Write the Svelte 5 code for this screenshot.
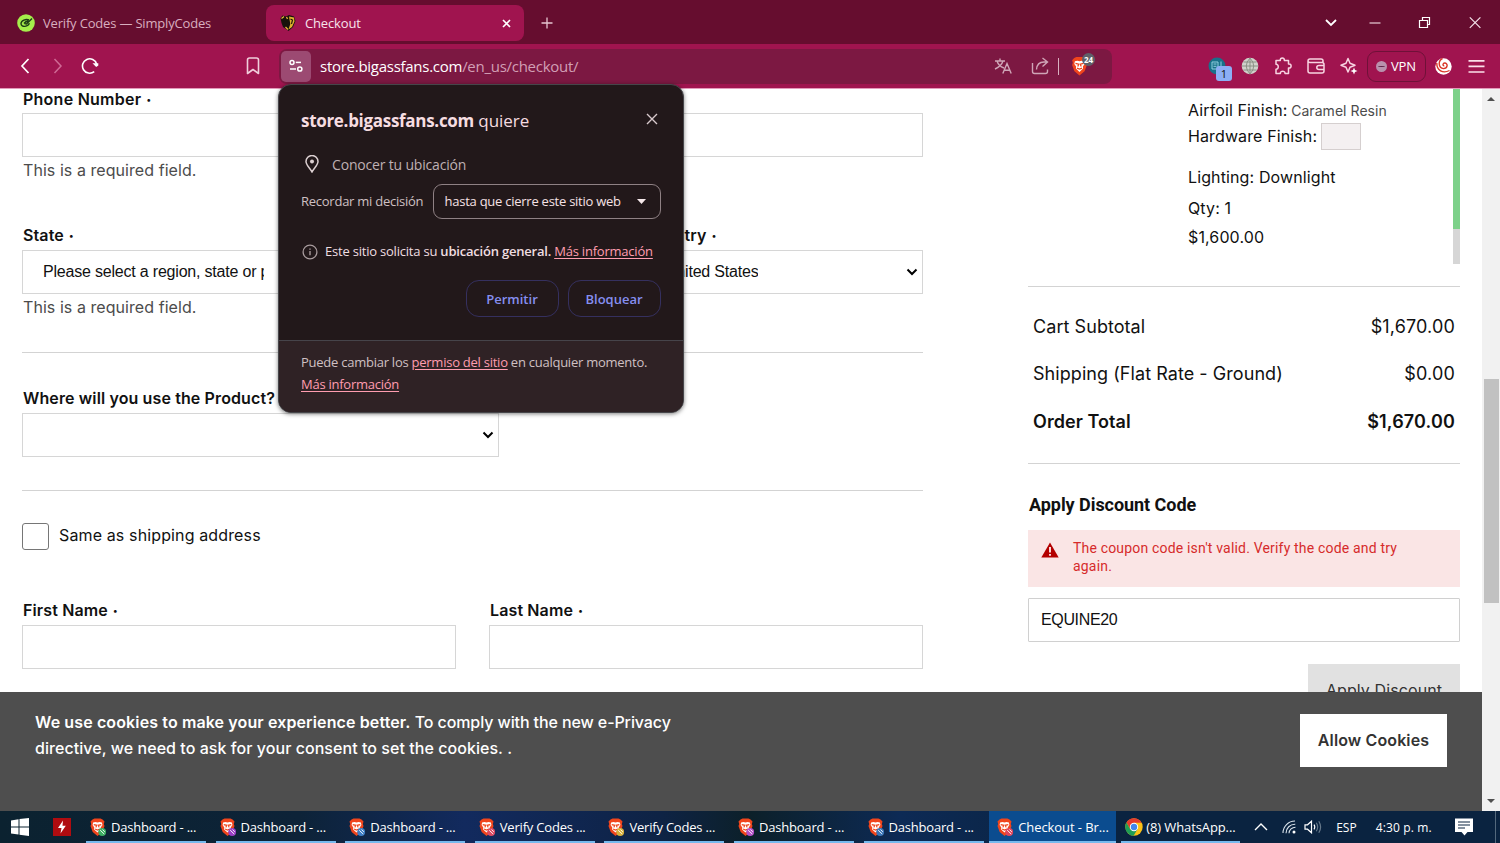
<script lang="ts">
  interface Task {
    title: string;
    badge: string;
    chrome?: boolean;
    active?: boolean;
  }

  const tasks: Task[] = [
    { title: 'Dashboard - ...', badge: '#3cae62' },
    { title: 'Dashboard - ...', badge: '#9a3fc4' },
    { title: 'Dashboard - ...', badge: '#3e7fc6' },
    { title: 'Verify Codes ...', badge: '#dd4a63' },
    { title: 'Verify Codes ...', badge: '#d8b13c' },
    { title: 'Dashboard - ...', badge: '#b652c8' },
    { title: 'Dashboard - ...', badge: '#3a76b8' },
    { title: 'Checkout - Br...', badge: '#e0465c', active: true },
    { title: '(8) WhatsApp...', badge: '', chrome: true }
  ];

  const totals = [
    { label: 'Cart Subtotal', value: '$1,670.00' },
    { label: 'Shipping (Flat Rate - Ground)', value: '$0.00' },
    { label: 'Order Total', value: '$1,670.00', strong: true }
  ];

  let coupon = $state('EQUINE20');
</script>

{#snippet lion()}
  <path d="M4 1.5 L6 0.5 H12 L14 1.5 L16 3.5 L15.3 6 L16 8 L13.8 14 L9 18 L4.2 14 L2 8 L2.7 6 L2 3.5Z" fill="#f0451c" />
  <path d="M4.6 4.6 L7 4 L9 4.5 L11 4 L13.4 4.6 L13.9 7 L12.2 9.4 L12.4 11.4 L9 14.6 L5.6 11.4 L5.8 9.4 L4.1 7Z" fill="#fff" />
  <path d="M5.2 6.6 L8.2 7.3 L7.4 9.4 M12.8 6.6 L9.8 7.3 L10.6 9.4 M6.6 11 L9 12 L11.4 11" stroke="#f0451c" stroke-width="1.2" fill="none" />
{/snippet}

{#snippet arrow()}
  <svg class="arrow" width="12" height="8" viewBox="0 0 12 8">
    <path d="M1.5 1.5 L6 6 L10.5 1.5" fill="none" stroke="#000" stroke-width="2" />
  </svg>
{/snippet}

<div class="window">
  <header class="tabs">
    <div class="tab">
      <svg width="18" height="18" viewBox="0 0 18 18">
        <circle cx="9" cy="9" r="8.8" fill="#a5ee4b" />
        <path d="M15 4.5 L9.5 10 L7.5 9.5 M12 6 C9 4.5 4 6.5 4 9.8 C4.2 13.6 11.5 13 12.3 9.2 M7 9.5 Q8.5 7.2 11.5 7" fill="none" stroke="#1c3a16" stroke-width="1.4" />
      </svg>
      <span class="t-verify">Verify Codes — SimplyCodes</span>
    </div>
    <div class="tab active">
      <svg width="16" height="18" viewBox="0 0 16 18">
        <path d="M0.5 4 L2.5 1.5 L6 2.5 L9 1 L14 2.5 L15.5 7 L13 13 L8.5 17 L6 15 L3 13 L1.5 9Z" fill="#17120b" />
        <path d="M9 2.5 L14 3.5 L14.5 7.5 L12 13 L8.5 15.5 L10.3 10Z" fill="#e0b02c" />
        <path d="M1.5 4.5 L4 2.5 M6.5 3 L7.5 5 M5.5 13 L8 15.5" stroke="#e5b83a" stroke-width="1.3" fill="none" />
        <path d="M10.5 5 L12.5 6 L11.5 10" stroke="#17120b" stroke-width="1.1" fill="none" />
      </svg>
      <span class="t-checkout">Checkout</span>
      <svg class="tab-close" width="9" height="9" viewBox="0 0 9 9">
        <path d="M1 1 L8 8 M8 1 L1 8" stroke="#fff" stroke-width="1.7" />
      </svg>
    </div>
    <svg class="new-tab" width="12" height="12" viewBox="0 0 12 12">
      <path d="M6 0.5 V11.5 M0.5 6 H11.5" stroke="#e6c5d1" stroke-width="1.3" />
    </svg>
    <div class="controls">
      <svg width="14" height="14" viewBox="0 0 14 14"><path d="M2 4 L7 9 L12 4" fill="none" stroke="#fff" stroke-width="1.8" /></svg>
      <svg width="14" height="14" viewBox="0 0 14 14"><path d="M1.5 7 H12.5" stroke="#e8cdd7" stroke-width="1.2" /></svg>
      <svg width="14" height="14" viewBox="0 0 14 14"><path d="M1.5 4.5 H9.5 V11.5 H1.5Z M4.5 4.5 V1.5 H11.5 V8.5 H9.5" fill="none" stroke="#fff" stroke-width="1.2" /></svg>
      <svg width="14" height="14" viewBox="0 0 14 14"><path d="M1.8 1.3 L12.4 11.9 M12.4 1.3 L1.8 11.9" stroke="#f3e2e9" stroke-width="1.2" /></svg>
    </div>
  </header>

  <div class="toolbar">
    <div class="nav">
      <svg width="12" height="18" viewBox="0 0 12 18"><path d="M9.5 2 L3 9 L9.5 16" fill="none" stroke="#fff" stroke-width="1.7" /></svg>
      <svg width="12" height="18" viewBox="0 0 12 18"><path d="M2.5 2 L9 9 L2.5 16" fill="none" stroke="#cf6a95" stroke-width="1.5" /></svg>
      <svg width="18" height="18" viewBox="0 0 18 18">
        <path d="M13.2 14.6 A7.2 7.2 0 1 1 15.6 7" fill="none" stroke="#fff" stroke-width="1.6" />
        <path d="M11.5 6.3 H17.3 V8.6 L15.2 10 Z" fill="#fff" />
      </svg>
      <svg class="bookmark" width="14" height="18" viewBox="0 0 14 18"><path d="M1.5 3 Q1.5 1 3.5 1 H10.5 Q12.5 1 12.5 3 V16.5 L7 12.5 L1.5 16.5Z" fill="none" stroke="#f0cddb" stroke-width="1.6" stroke-linejoin="round" /></svg>
    </div>
    <div class="url">
      <div class="site">
        <svg width="16" height="16" viewBox="0 0 16 16" fill="none" stroke="#fff" stroke-width="1.5">
          <circle cx="4" cy="4.4" r="2" /><path d="M7.8 4.4 H13" />
          <circle cx="11.8" cy="11" r="2.1" /><path d="M2 11 H8" />
        </svg>
      </div>
      <span class="address"><b>store.bigassfans.com</b>/en_us/checkout/</span>
      <svg class="translate" width="18" height="18" viewBox="0 0 18 18" fill="none" stroke="#cfa5b7" stroke-width="1.4">
        <path d="M1 4 H11 M6 1.5 V4 M3 4 Q4.5 9 10 11 M9 4 Q7.5 9 1 12 M8.8 16.5 L13 6.5 L17.2 16.5 M10.2 13.2 H15.8" />
      </svg>
      <svg class="share" width="18" height="18" viewBox="0 0 18 18" fill="none" stroke="#cfa5b7" stroke-width="1.4">
        <path d="M1.5 6 V14.5 Q1.5 16.5 3.5 16.5 H14.5 Q16.5 16.5 16.5 14.5 V12.5 M11.5 1 L16.5 5 L11.5 9.5 M16.5 5 H13 Q6 5 5.5 12.5" />
      </svg>
      <i class="sep"></i>
      <span class="shields">
        <svg width="19" height="20" viewBox="0 0 18 18">{@render lion()}</svg>
        <em>24</em>
      </span>
    </div>
    <div class="extensions">
      <span class="ext-doc">
        <svg width="18" height="18" viewBox="0 0 18 18"><circle cx="9" cy="9" r="8.5" fill="#19708a" /><path d="M4 5 H10 V12 H4Z M5.5 7 H8.5 M5.5 9.3 H8.5 M13 4.5 V9" fill="none" stroke="#8fd0e0" stroke-width="1" /></svg>
        <em>1</em>
      </span>
      <svg width="18" height="18" viewBox="0 0 18 18"><circle cx="9" cy="9" r="8.3" fill="#d0d2cb" /><path d="M9 1 V17 M1 9 H17 M2.5 5 H15.5 M2.5 13 H15.5 M9 1 Q1.5 9 9 17 M9 1 Q16.5 9 9 17" fill="none" stroke="#858b80" stroke-width="0.9" /></svg>
      <svg width="18" height="18" viewBox="0 0 18 18"><path d="M2 3.5 H6.3 C5.6 0.2 11 0.2 10.3 3.5 H14.5 V7 C18 6.3 18 11.7 14.5 11 V16.5 H11 C11.4 13.4 6 13.4 6.4 16.5 H2 V12.3 C5 12.4 5 7 2 7.3Z" fill="none" stroke="#f7d3e1" stroke-width="1.5" stroke-linejoin="round" /></svg>
      <svg width="18" height="18" viewBox="0 0 18 18" fill="none" stroke="#f7d3e1" stroke-width="1.5"><path d="M16 5.5 V3.8 Q16 2 14 2 H3 Q1 2 1 4 Q1 5.5 3 5.5 H15 Q17 5.5 17 7.5 V14 Q17 16 15 16 H3 Q1 16 1 14 V4 M17 8.5 H12 Q9.8 8.5 9.8 10.5 Q9.8 12.5 12 12.5 H17" /></svg>
      <svg width="18" height="18" viewBox="0 0 18 18"><path d="M8 1.5 L10 6.2 L15 8.2 L10 10.2 L8 15 L6 10.2 L1 8.2 L6 6.2Z" fill="none" stroke="#f7d3e1" stroke-width="1.5" stroke-linejoin="round" /><path d="M14 10.5 L15 13 L17.5 14 L15 15 L14 17.5 L13 15 L10.5 14 L13 13Z" fill="#fff" /></svg>
      <span class="vpn"><i></i>VPN</span>
      <svg width="17" height="17" viewBox="0 0 17 17"><circle cx="8.5" cy="8.5" r="8.2" fill="#fff" /><path d="M7.5 0.5 C3 2.5 3 10 8.5 10.6 C12.8 10.6 13.2 5.5 10 5 C7.7 4.8 7.3 7.8 9.3 8 M1.8 5 C1.5 12.5 8 15.8 14.5 12.5" fill="none" stroke="#d93628" stroke-width="1.4" /></svg>
      <svg class="menu" width="17" height="15" viewBox="0 0 17 15"><path d="M0.5 1.8 H16.5 M0.5 7.4 H16.5 M0.5 13 H16.5" stroke="#fbdfea" stroke-width="1.7" /></svg>
    </div>
  </div>

  <div class="page">
    <main>
      <div class="row two">
        <div class="field">
          <div class="label t-phone">Phone Number <sup>•</sup></div>
          <div class="input"></div>
          <div class="note">This is a required field.</div>
        </div>
        <div class="field">
          <div class="label"></div>
          <div class="input"></div>
        </div>
      </div>
      <div class="row three">
        <div class="field">
          <div class="label">State <sup>•</sup></div>
          <div class="input select"><span>Please select a region, state or province.</span>{@render arrow()}</div>
          <div class="note">This is a required field.</div>
        </div>
        <div class="field">
          <div class="label"></div>
          <div class="input"></div>
        </div>
        <div class="field">
          <div class="label">Country <sup>•</sup></div>
          <div class="input select"><span>United States</span>{@render arrow()}</div>
        </div>
      </div>
      <hr />
      <div class="field usage">
        <div class="label">Where will you use the Product?</div>
        <div class="input select"><span></span>{@render arrow()}</div>
      </div>
      <hr class="low" />
      <div class="check"><i></i><span>Same as shipping address</span></div>
      <div class="row two">
        <div class="field">
          <div class="label">First Name <sup>•</sup></div>
          <div class="input"></div>
        </div>
        <div class="field">
          <div class="label">Last Name <sup>•</sup></div>
          <div class="input"></div>
        </div>
      </div>
    </main>

    <aside>
      <div class="product">
        <div class="options">
          <p>Airfoil Finish: <small>Caramel Resin</small></p>
          <p>Hardware Finish: <i></i></p>
          <p class="lighting">Lighting: Downlight</p>
          <p class="qty">Qty: 1</p>
          <p>$1,600.00</p>
        </div>
        <div class="track"><i></i></div>
      </div>
      <div class="totals">
        {#each totals as row}
          <div class="total" class:strong={row.strong}><span>{row.label}</span><span>{row.value}</span></div>
        {/each}
      </div>
      <h3>Apply Discount Code</h3>
      <div class="error">
        <svg width="18" height="16" viewBox="0 0 18 16"><path d="M9 0.5 L17.7 15.5 H0.3Z" fill="#b30000" /><path d="M9 5 V10.5 M9 12 V13.7" stroke="#fae5e5" stroke-width="1.9" /></svg>
        <p>The coupon code isn't valid. Verify the code and try<br />again.</p>
      </div>
      <input class="coupon" bind:value={coupon} />
      <button class="apply">Apply Discount</button>
    </aside>

    <div class="scrollbar">
      <svg width="8" height="4" viewBox="0 0 8 4"><path d="M0 4 L4 0 L8 4Z" fill="#505050" /></svg>
      <i></i>
      <svg width="8" height="4" viewBox="0 0 8 4"><path d="M0 0 L4 4 L8 0Z" fill="#505050" /></svg>
    </div>

    <div class="cookies">
      <p><b>We use cookies to make your experience better.</b> <span>To comply with the new e-Privacy</span><br /><span class="second">directive, we need to ask for your consent to set the cookies. .</span></p>
      <button>Allow Cookies</button>
    </div>
  </div>

  <footer class="taskbar">
    <svg class="start" width="18" height="18" viewBox="0 0 18 18"><path d="M0 2.5 L7.5 1.3 V8.4 H0Z M8.5 1.1 L18 0 V8.4 H8.5Z M0 9.4 H7.5 V16.6 L0 15.5Z M8.5 9.4 H18 V18 L8.5 16.8Z" fill="#fff" /></svg>
    <svg class="flash" width="18" height="18" viewBox="0 0 18 18"><rect width="18" height="18" fill="#b00c10" /><path d="M10 2.5 L5 10 H8.5 L7.5 15.5 L12.8 7.8 H9.5Z" fill="#fff" /></svg>
    {#each tasks as task}
      <div class="task" class:active={task.active} class:chrome={task.chrome}>
        {#if task.chrome}
          <svg width="18" height="18" viewBox="0 0 18 18">
            <circle cx="9" cy="9" r="8.7" fill="#fbc116" />
            <path d="M1.5 4.6 A8.7 8.7 0 0 1 16.6 4.7 H9 L5.2 11.2Z" fill="#e33b2e" />
            <path d="M1.5 4.6 A8.7 8.7 0 0 0 8.6 17.7 L12.6 11 L5.2 11.2Z" fill="#1f9d55" />
            <circle cx="9" cy="9" r="4.2" fill="#fff" /><circle cx="9" cy="9" r="3.2" fill="#4186ee" />
          </svg>
        {:else}
          <svg width="18" height="19" viewBox="1.5 0 18 19">
            {@render lion()}
            <circle cx="13.7" cy="14" r="3.9" fill={task.badge} />
            <path d="M11.7 12.2 L15.7 16 M14 11.5 L16.4 13.8" stroke="#fff" stroke-width="0.9" />
          </svg>
        {/if}
        <span>{task.title}</span>
      </div>
    {/each}
    <div class="tray">
      <svg width="14" height="14" viewBox="0 0 14 14"><path d="M1 10 L7 4 L13 10" fill="none" stroke="#fff" stroke-width="1.4" /></svg>
      <svg class="wifi" width="14" height="14" viewBox="0 0 14 14" fill="none" stroke="#dbe4ec" stroke-width="1.1"><path d="M1 13 A12 12 0 0 1 13 1 M4 13.3 A9 9 0 0 1 13.3 4.2 M7 13.3 A6.5 6.5 0 0 1 13.5 7.2" /><circle cx="12" cy="12" r="1.5" fill="#fff" stroke="none" /></svg>
      <svg class="volume" width="18" height="14" viewBox="0 0 18 14" fill="none" stroke="#fff" stroke-width="1.2"><path d="M1 4.8 H3.5 L7.5 1.2 V12.8 L3.5 9.2 H1Z M10 4.6 Q11.5 7 10 9.4" /><path d="M12.3 2.8 Q15 7 12.3 11.2 M14.8 1.2 Q18.4 7 14.8 12.8" stroke="#66788a" /></svg>
      <span class="lang">ESP</span>
      <span class="clock">4:30 p. m.</span>
      <svg class="action" width="18" height="18" viewBox="0 0 18 18"><path d="M0 0.5 H18 V14 H12.5 L9.5 17.5 L6.5 14 H0Z" fill="#fff" /><path d="M3 4 H15 M3 7 H15 M3 10 H10" stroke="#0c2440" stroke-width="1.2" /></svg>
    </div>
    <i class="desktop"></i>
  </footer>

  <div class="popup">
    <div class="body">
      <div class="title"><span><b>store.bigassfans.com</b> quiere</span>
        <svg width="12" height="12" viewBox="0 0 12 12"><path d="M1 1 L11 11 M11 1 L1 11" stroke="#d8c9cc" stroke-width="1.4" /></svg>
      </div>
      <div class="perm">
        <svg width="14" height="18" viewBox="0 0 14 18"><path d="M7 17 C5 13 1 10 1 6.5 A6 6 0 0 1 13 6.5 C13 10 9 13 7 17Z" fill="none" stroke="#dccfd1" stroke-width="1.5" /><circle cx="7" cy="6.6" r="2" fill="#dccfd1" /></svg>
        <span>Conocer tu ubicación</span>
      </div>
      <div class="remember">
        <span>Recordar mi decisión</span>
        <div class="duration"><span>hasta que cierre este sitio web</span><svg width="9" height="5" viewBox="0 0 9 5"><path d="M0 0 H9 L4.5 5Z" fill="#f6e9eb" /></svg></div>
      </div>
      <div class="info">
        <svg width="16" height="16" viewBox="0 0 16 16"><circle cx="8" cy="8" r="6.9" fill="none" stroke="#a89b9d" stroke-width="1.3" /><path d="M8 7 V11.3 M8 4.5 V5.8" stroke="#a89b9d" stroke-width="1.4" /></svg>
        <span>Este sitio solicita su <b>ubicación general.</b> <u>Más información</u></span>
      </div>
      <div class="actions"><button>Permitir</button><button>Bloquear</button></div>
    </div>
    <div class="foot"><span>Puede cambiar los <u>permiso del sitio</u> en cualquier momento.</span><br /><u>Más información</u></div>
  </div>
</div>

<style>
  :global(body) {
    margin: 0;
    overflow: hidden;
  }

  .window {
    position: relative;
    display: flex;
    flex-direction: column;
    width: 1500px;
    height: 843px;
    overflow: hidden;
    background: #fff;
    font-family: 'Open Sans', 'Noto Sans', sans-serif;
    white-space: nowrap;
  }

  .window * {
    box-sizing: border-box;
  }

  svg {
    display: block;
    flex-shrink: 0;
  }

  p, h3 {
    margin: 0;
  }

  i, em {
    font-style: normal;
  }

  .tabs {
    display: flex;
    align-items: center;
    height: 44px;
    padding-bottom: 2px;
    background: #660d2f;
    flex-shrink: 0;
  }

  .tab {
    display: flex;
    align-items: center;
    width: 258px;
    height: 36px;
    margin-top: 4px;
    padding: 0 13px 0 17px;
    gap: 8px;
    font-size: 13px;
    color: #d9aebf;
  }

  .tab.active {
    margin-left: 8px;
    padding-left: 14px;
    gap: 9px;
    border-radius: 8px;
    background: #a0144f;
    color: #f7e3eb;
  }

  .t-verify {
    letter-spacing: -0.18px;
  }

  .t-checkout {
    letter-spacing: -0.15px;
  }

  .tab-close {
    margin-left: auto;
  }

  .new-tab {
    margin: 3px 0 0 17px;
  }

  .controls {
    display: flex;
    gap: 36px;
    margin: 3px 18px 0 auto;
  }

  .controls svg:first-child {
    margin-right: -6px;
  }

  .toolbar {
    display: flex;
    align-items: center;
    height: 45px;
    flex-shrink: 0;
    background: #a0144f;
    border-bottom: 1px solid #e39abb;
  }

  .nav {
    display: flex;
    gap: 19px;
    width: 279px;
    padding-left: 19px;
  }

  .nav svg:nth-child(2) {
    margin-left: 2px;
  }

  .nav svg:nth-child(3) {
    margin-left: -2px;
  }

  .bookmark {
    margin-left: 128px;
  }

  .url {
    display: flex;
    align-items: center;
    width: 833px;
    height: 35px;
    padding-left: 2px;
    border-radius: 8px;
    background: #7c1842;
  }

  .site {
    display: grid;
    place-items: center;
    width: 30px;
    height: 31px;
    border-radius: 5px;
    background: #9c4a72;
  }

  .address {
    margin-left: 9px;
    font-size: 15px;
    letter-spacing: -0.27px;
    color: #d29fb5;
  }

  .address b {
    font-weight: 400;
    color: #fff;
  }

  .translate {
    margin-left: auto;
  }

  .share {
    margin-left: 19px;
  }

  .sep {
    width: 1px;
    height: 17px;
    margin-left: 9px;
    background: #d8b1c1;
  }

  .shields {
    position: relative;
    width: 53px;
    padding-left: 11px;
  }

  .shields em {
    position: absolute;
    left: 23px;
    top: -3px;
    width: 13px;
    height: 13px;
    border-radius: 7px;
    background: #5f6069;
    color: #fff;
    font-size: 8px;
    font-weight: 700;
    line-height: 13px;
    text-align: center;
  }

  .extensions {
    display: flex;
    align-items: center;
    gap: 15px;
    margin: 0 15px 0 auto;
  }

  .ext-doc {
    position: relative;
  }

  .ext-doc em {
    position: absolute;
    left: 8px;
    top: 9px;
    width: 16px;
    height: 15px;
    border-radius: 3px;
    background: #8caef5;
    color: #111;
    font-size: 11px;
    line-height: 15px;
    text-align: center;
  }

  .vpn {
    display: flex;
    align-items: center;
    gap: 4px;
    width: 59px;
    height: 31px;
    margin: 0 -6px 0 -6px;
    padding-left: 8px;
    border: 1px solid #6f1138;
    border-radius: 9px;
    color: #fff;
    font-size: 13px;
    letter-spacing: -0.2px;
  }

  .menu {
    margin-left: 1px;
  }

  .vpn i {
    width: 11px;
    height: 11px;
    border: solid #b991ad;
    border-width: 5px 2px;
    border-radius: 50%;
    background: #5b2044;
  }

  .page {
    position: relative;
    display: flex;
    flex: 1;
    min-height: 0;
    font-family: Inter, 'Liberation Sans', sans-serif;
    font-size: 16px;
    color: #111;
    overflow: hidden;
  }

  main {
    width: 901px;
    margin-left: 22px;
  }

  .row {
    display: grid;
  }

  .two {
    grid-template-columns: 1fr 1fr;
    gap: 33px;
  }

  .three {
    grid-template-columns: repeat(3, 1fr);
    gap: 29px;
    margin-top: 42px;
  }

  .label {
    height: 20px;
    margin-bottom: 5px;
    padding-left: 1px;
    line-height: 20px;
    font-weight: 600;
    letter-spacing: 0.12px;
  }

  .row:first-child .label {
    margin-bottom: 4px;
  }

  .t-phone {
    letter-spacing: 0.25px;
  }

  sup {
    font-size: 9px;
    line-height: 0;
    margin-left: 1px;
    vertical-align: 2px;
  }

  .input {
    height: 44px;
    border: 1px solid #d6d6d6;
    background: #fff;
  }

  .select {
    display: flex;
    align-items: center;
    justify-content: space-between;
    padding: 0 4px 0 20px;
    font-family: 'Liberation Sans', Arial, sans-serif;
    font-size: 16px;
  }

  .select span {
    overflow: hidden;
    line-height: 24px;
    letter-spacing: -0.2px;
  }

  .three .field:first-child .select span {
    flex: 0 0 221px;
  }

  .three .field:last-child .select {
    padding-left: 22px;
  }

  .note {
    height: 26px;
    padding-left: 1px;
    line-height: 26px;
    color: #4c4c4c;
    letter-spacing: 0.06px;
  }

  hr {
    height: 1px;
    margin: 32px 0;
    border: 0;
    background: #d3d3d3;
  }

  .usage {
    width: 477px;
    margin-top: 35px;
  }

  hr.low {
    margin-top: 33px;
  }

  .check {
    display: flex;
    align-items: center;
    gap: 10px;
    height: 27px;
    margin-bottom: 50px;
    letter-spacing: 0.13px;
  }

  .check span {
    margin-top: -3px;
  }

  .check i {
    width: 27px;
    height: 27px;
    border: 1px solid #767676;
    border-radius: 3px;
  }

  aside {
    width: 432px;
    margin-left: 105px;
  }

  .product {
    display: flex;
    justify-content: space-between;
    height: 175px;
    padding-left: 160px;
  }

  .options {
    padding-top: 9px;
    letter-spacing: 0.12px;
  }

  .options p {
    height: 26px;
    line-height: 24px;
  }

  .options small {
    font-size: 14px;
    margin-left: -1px;
    letter-spacing: 0.05px;
    color: #4c4c4c;
  }

  .options i {
    display: inline-block;
    width: 40px;
    height: 27px;
    margin: -2px 0 0 -1px;
    vertical-align: middle;
    border: 1px solid #d5cfcf;
    background: #f4f0f1;
  }

  .options .lighting {
    height: 31px;
    margin-top: 15px;
  }

  .options .qty {
    height: 29px;
  }

  .track {
    width: 7px;
    background: #d6d6d6;
  }

  .track i {
    display: block;
    height: 140px;
    background: #7dd18a;
  }

  .totals {
    margin: 22px 0 29px;
    padding: 17px 5px 16px;
    border: solid #d3d3d3;
    border-width: 1px 0;
    height: 178px;
  }

  .total {
    display: flex;
    justify-content: space-between;
    height: 47px;
    line-height: 46px;
    font-size: 18px;
    letter-spacing: 0.06px;
  }

  .total span:last-child {
    letter-spacing: 0.15px;
  }

  .strong {
    margin-top: 1px;
    font-weight: 600;
  }

  h3 {
    height: 37px;
    padding-left: 1px;
    font: 700 18px/24px Roboto, sans-serif;
    letter-spacing: -0.05px;
  }

  .error {
    display: flex;
    gap: 14px;
    height: 57px;
    padding: 10px 13px;
    background: #fae5e5;
    color: #d62b2b;
    font-size: 14px;
    line-height: 17.5px;
    font-family: Roboto, sans-serif;
    letter-spacing: 0.18px;
  }

  .error svg {
    margin-top: 2px;
  }

  .coupon {
    display: block;
    width: 432px;
    height: 44px;
    margin: 11px 0 22px;
    padding: 0 12px;
    border: 1px solid #d0d0d0;
    border-radius: 1px;
    font: 16px 'Liberation Sans', Arial, sans-serif;
    letter-spacing: -0.35px;
    color: #111;
  }

  .apply {
    display: block;
    width: 152px;
    height: 52px;
    margin-left: auto;
    padding: 0;
    border: 0;
    background: #e1e1e1;
    font: 16px Inter, sans-serif;
    letter-spacing: 0.1px;
    color: #333;
  }

  .scrollbar {
    display: flex;
    flex-direction: column;
    align-items: center;
    width: 18px;
    margin-left: auto;
    padding: 8px 0;
    background: #f1f1f1;
  }

  .scrollbar i {
    width: 15px;
    height: 224px;
    margin: 278px 0 auto;
    background: #c1c1c1;
  }

  .cookies {
    position: absolute;
    left: 0;
    bottom: 0;
    display: flex;
    justify-content: space-between;
    width: 1482px;
    height: 119px;
    padding: 16.5px 35px;
    background: #4e4e4e;
    color: #fff;
    font-weight: 500;
    line-height: 26px;
    letter-spacing: -0.1px;
  }

  .cookies b {
    font-weight: 600;
    letter-spacing: 0.12px;
  }

  .second {
    letter-spacing: 0.05px;
  }

  .cookies button {
    width: 147px;
    height: 53px;
    margin-top: 5px;
    padding: 0;
    border: 0;
    background: #fff;
    color: #333;
    font: 600 16px Inter, sans-serif;
    letter-spacing: 0.12px;
  }

  .taskbar {
    display: flex;
    align-items: center;
    height: 32px;
    flex-shrink: 0;
    background: linear-gradient(90deg, #0b2230, #0d2338 20%, #122a5e 31%, #0e2345 44%, #0c2029 50%, #0d2a55 60%, #0a2340 72%, #0a2340);
    color: #fff;
    font-size: 13px;
  }

  .start {
    margin-left: 11px;
  }

  .flash {
    margin: 0 10px 0 24px;
  }

  .task {
    display: flex;
    align-items: center;
    gap: 3px;
    width: 120px;
    height: 32px;
    margin-left: 5px;
    margin-right: 4.6px;
    padding: 2px 0 0 4px;
    border-bottom: 2px solid #76b9ed;
    letter-spacing: -0.2px;
  }

  .task.active {
    width: 127px;
    margin: 0;
    margin-left: 1px;
    padding-left: 8px;
    letter-spacing: -0.08px;
    background: #0b4c8f;
  }

  .task.chrome {
    width: 119px;
    margin: 0 0 0 5px;
    padding-left: 4px;
    letter-spacing: -0.1px;
  }

  .tray {
    display: flex;
    align-items: center;
    margin-left: 14px;
    font-size: 12px;
  }

  .wifi {
    margin-left: 14px;
  }

  .volume {
    margin-left: 8px;
  }

  .lang {
    margin-left: 14px;
  }

  .clock {
    margin-left: 19px;
    letter-spacing: 0.15px;
  }

  .action {
    margin-left: 23px;
  }

  .desktop {
    width: 1px;
    height: 32px;
    margin: 0 4px 0 auto;
    background: #53687c;
  }

  .popup {
    position: absolute;
    left: 278px;
    top: 84px;
    width: 405.5px;
    height: 329px;
    overflow: hidden;
    border: 1px solid #46464a;
    border-radius: 13px;
    background: #22181a;
    box-shadow: 0 1px 4px rgba(0, 0, 0, 0.5);
    color: #cfc0c3;
    font-size: 13px;
    letter-spacing: -0.25px;
  }

  .body {
    height: 255px;
    padding: 20px 22px 0;
  }

  .title {
    display: flex;
    justify-content: space-between;
    align-items: center;
    height: 30px;
    padding-right: 3px;
    color: #f6dde1;
    font-size: 17px;
    letter-spacing: -0.05px;
  }

  .title svg {
    margin-top: -2px;
  }

  .title b {
    font-weight: 700;
    letter-spacing: -0.3px;
  }

  .perm {
    display: flex;
    align-items: center;
    gap: 13px;
    height: 24px;
    margin-top: 17px;
    padding-left: 4px;
    font-size: 14px;
    letter-spacing: -0.18px;
    color: #bfb0b3;
  }

  .remember {
    display: flex;
    justify-content: space-between;
    align-items: center;
    height: 35px;
    margin-top: 8px;
  }

  .remember span {
    margin-top: -1px;
  }

  .duration {
    display: flex;
    align-items: center;
    justify-content: space-between;
    width: 228px;
    height: 35px;
    padding: 0 14px 0 11px;
    border: 1px solid #8f8184;
    border-radius: 9px;
    color: #f6e2e5;
  }

  .info {
    display: flex;
    align-items: center;
    gap: 7px;
    height: 24px;
    margin-top: 21px;
    padding-left: 1px;
    letter-spacing: -0.21px;
    color: #f0dee1;
  }

  .info span {
    margin-top: -2px;
  }

  .info b {
    font-weight: 600;
  }

  u {
    color: #ff9db0;
    text-underline-offset: 2px;
  }

  .actions {
    display: flex;
    justify-content: flex-end;
    gap: 9px;
    margin-top: 16px;
  }

  .actions button {
    width: 93px;
    height: 37px;
    padding: 0;
    border: 1px solid #35305f;
    border-radius: 13px;
    background: transparent;
    color: #868ff0;
    font: 600 13px 'Open Sans', sans-serif;
  }

  .foot {
    height: 73px;
    padding: 10px 22px;
    border-top: 1px solid #46444a;
    background: #2f2225;
    line-height: 22px;
  }
</style>
